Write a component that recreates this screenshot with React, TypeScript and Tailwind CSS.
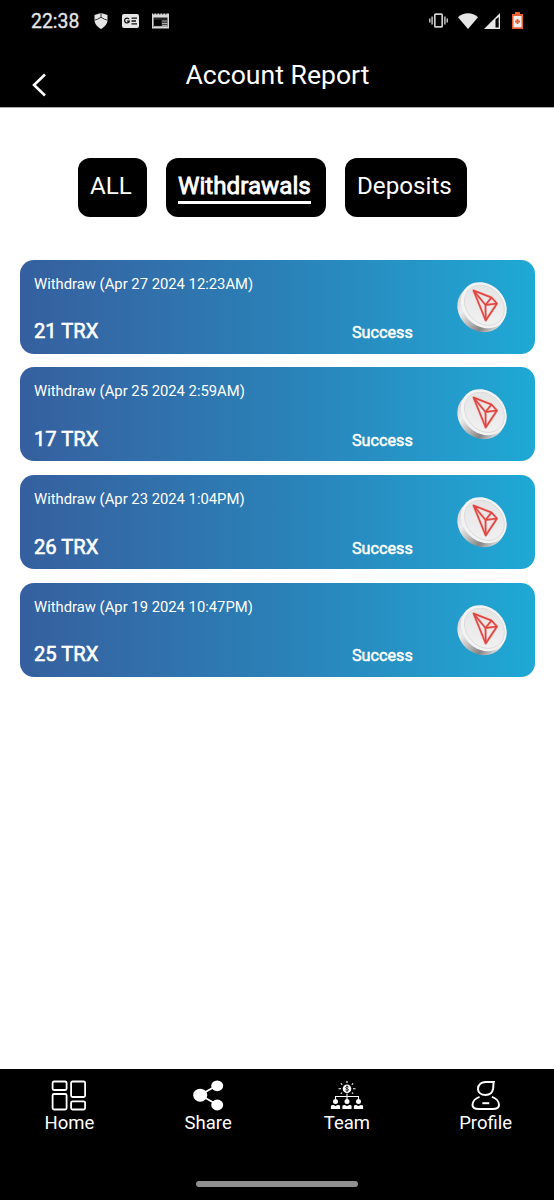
import type { ReactNode } from "react";

const tabs = [
  { label: "ALL", width: "w-[69px]" },
  { label: "Withdrawals", width: "w-[160px]" },
  { label: "Deposits", width: "w-[122px]" },
];

const reports = [
  { date: "Apr 27 2024 12:23AM", amount: 21 },
  { date: "Apr 25 2024 2:59AM", amount: 17 },
  { date: "Apr 23 2024 1:04PM", amount: 26 },
  { date: "Apr 19 2024 10:47PM", amount: 25 },
];

function StatusBar() {
  return (
    <div className="flex h-[41px] items-center pl-[31px] pr-[30px] text-[#e6e6e6]">
      <span className="w-[63px] pt-px text-[19.4px] leading-[41px] [-webkit-text-stroke:0.3px_#e6e6e6]">22:38</span>
      <svg className="h-4 w-[14px]" viewBox="0 0 14 16">
        <path d="M7 0 L13.5 2 V7 C13.5 11 10.5 14 7 16 C3.5 14 .5 11 .5 7 V2Z" fill="#e6e6e6" />
        <path d="M7 0V4.3M.5 7.2L3.5 6.2L7 4.3L10.5 6.2L13.5 7.2" fill="none" stroke="#222" strokeWidth=".9" />
      </svg>
      <svg className="ml-[14px] h-[14px] w-[17px]" viewBox="0 0 17 14" fill="none">
        <rect width="17" height="14" rx="2" fill="#e6e6e6" />
        <path d="M7 5.2A2.4 2.4 0 1 0 7.3 7.2H5M9.5 4.2H15M9.5 7H14M9.5 9.8H15" stroke="#111" strokeWidth="1.3" />
      </svg>
      <svg className="ml-[13px] h-[16px] w-[17px]" viewBox="0 0 17 16" fill="none">
        <path d="M0 .5H17V15.5H0Z" fill="#d8d8d8" />
        <path d="M1.8 0V1.5M4.8 0V1.5M7.8 0V1.5M10.8 0V1.5M13.8 0V1.5" stroke="black" strokeWidth="1" />
        <path d="M1.5 4.5H15.5V14H1.5Z" fill="#222" />
        <path d="M10 8H15.5M10 10.3H15.5M2 13.5H15.5M10 12.3H15.5" stroke="#aaa" strokeWidth="1.2" />
        <path d="M2 7H9V12.5H2Z" fill="black" />
      </svg>
      <div className="ml-auto flex items-center">
        <svg className="h-[15px] w-[19px]" viewBox="0 0 19 15" fill="none" stroke="#d0d0d0">
          <rect x="5.8" y="1.1" width="7.4" height="12.8" rx="1" strokeWidth="1.7" />
          <path d="M.8 5.5V9.5M3.1 3.5V11.5M15.9 3.5V11.5M18.2 5.5V9.5" strokeWidth="1.4" />
        </svg>
        <svg className="ml-[10px] h-[16px] w-[20px]" viewBox="0 0 20 16">
          <path d="M0 4.2C5.5-1.2 14.5-1.2 20 4.2L10 16Z" fill="#e6e6e6" />
        </svg>
        <svg className="ml-[6px] mr-px h-[16px] w-[16px]" viewBox="0 0 16 16">
          <path d="M16 0V16H0Z" fill="#e6e6e6" />
          <path d="M11.5 6.5L14.7 4V14.6H11.5Z" fill="#000" />
        </svg>
        <svg className="ml-[11px] mr-px h-[17px] w-[11px]" viewBox="0 0 11 17">
          <path d="M3 0H8V2H11V17H0V2H3Z" fill="#e65f35" />
          <path d="M1.5 4H9.5V15.3H1.5Z" fill="#eee" />
          <path d="M5.5 7V12M3 9.5H8" stroke="#e65f35" strokeWidth="1.9" />
        </svg>
      </div>
    </div>
  );
}

function TronCoin() {
  return (
    <svg className="h-[54px] w-[54px]" viewBox="0 0 54 54">
      <defs>
        <linearGradient id="edge" x1="0" y1="0" x2="1" y2="0">
          <stop offset="0" stopColor="#d4d4d4" />
          <stop offset="0.25" stopColor="#ededed" />
          <stop offset="0.55" stopColor="#b2b2b2" />
          <stop offset="0.75" stopColor="#858585" />
          <stop offset="1" stopColor="#dcdcdc" />
        </linearGradient>
        <linearGradient id="face" x1="0" y1="0" x2="1" y2="1">
          <stop offset="0" stopColor="#e2e2e2" />
          <stop offset="1" stopColor="#f3f3f3" />
        </linearGradient>
      </defs>
      <ellipse cx="25.3" cy="27.6" rx="25.2" ry="22.3" transform="rotate(42 25.3 27.6)" fill="url(#edge)" />
      <ellipse cx="27.8" cy="24.2" rx="25" ry="20.8" transform="rotate(46 27.8 24.2)" fill="#f3f3f3" />
      <ellipse cx="28.4" cy="24.3" rx="22" ry="17.8" transform="rotate(46 28.4 24.3)" fill="url(#face)" stroke="#d7d7d7" strokeWidth="0.8" />
      <g fill="none" strokeLinejoin="round">
        <path d="M17.5 9.5L35.5 16.5 41 22.5 29.7 39.5Z M17.5 9.5L29.5 24 41 22.5 M29.5 24L29.7 39.5 M29.5 24L35.5 16.5" stroke="#f0aaa6" strokeWidth="2.5" />
        <path d="M17.5 9.5L35.5 16.5 41 22.5 29.7 39.5Z M17.5 9.5L29.5 24 41 22.5 M29.5 24L29.7 39.5 M29.5 24L35.5 16.5" stroke="#df4441" strokeWidth="1.4" />
      </g>
    </svg>
  );
}

function ReportCard({ date, amount }: { date: string; amount: number }) {
  return (
    <div className="flex h-[94px] rounded-[14px] bg-linear-to-r from-[#355f9e] via-[#2a80b7] to-[#1ea9d5] pl-[14px] text-white">
      <div className="w-[318px]">
        <p className="mt-[13px] text-[14.8px] leading-[22px]">Withdraw ({date})</p>
        <p className="mt-[23.7px] text-[20.2px] leading-[26px] [-webkit-text-stroke:0.6px_white]">{amount} TRX</p>
      </div>
      <p className="mt-[62.7px] w-[104px] text-[16.2px] leading-[22px] [-webkit-text-stroke:0.5px_white]">Success</p>
      <div className="mt-[21px]">
        <TronCoin />
      </div>
    </div>
  );
}

function NavItem({ label, children }: { label: string; children: ReactNode }) {
  return (
    <div className="flex flex-1 flex-col items-center pt-[10px]">
      <svg className="h-[34px] w-[36px]" viewBox="0 0 36 34" fill="none" stroke="white">
        {children}
      </svg>
      <span className="text-[18.5px] leading-[20px]">{label}</span>
    </div>
  );
}

function Member({ x }: { x: number }) {
  return (
    <g fill="white" stroke="none">
      <circle cx={x} cy="22.6" r="2.5" />
      <path d={`M${x - 4.6} 30V27Q${x - 4.6} 26 ${x - 2.3} 26L${x} 27L${x + 2.3} 26Q${x + 4.6} 26 ${x + 4.6} 27V30Z`} />
    </g>
  );
}

function BottomNav() {
  return (
    <nav className="flex h-[131px] flex-col bg-black text-white">
      <div className="flex w-[555px]">
        <NavItem label="Home">
          <g strokeWidth="1.8">
            <rect x="1.6" y="2.5" width="14" height="8.5" rx="1.5" />
            <rect x="20.1" y="2.5" width="14" height="15.5" rx="1.5" />
            <rect x="1.6" y="15" width="14" height="15.5" rx="1.5" />
            <rect x="20.1" y="22.3" width="14" height="8.2" rx="1.5" />
          </g>
        </NavItem>
        <NavItem label="Share">
          <path d="M27 6.5L10 16L27 25.5" strokeWidth="1.9" />
          <g fill="white" stroke="none">
            <ellipse cx="10.2" cy="16.2" rx="7" ry="6.5" />
            <ellipse cx="27.2" cy="6.8" rx="6" ry="5.4" />
            <ellipse cx="27.2" cy="26" rx="6" ry="5.4" />
          </g>
        </NavItem>
        <NavItem label="Team">
          <circle cx="18" cy="9.7" r="4.3" fill="white" stroke="none" />
          <path d="M18 2V3.9M11.8 4.4L13.2 5.7M24.2 4.4L22.8 5.7M9.5 9.7H12M24 9.7H26.5M11.8 14.7L13.1 13.6M24.2 14.7L22.9 13.6M18 14.5V21M6.5 21V17.5H29.5V21" strokeWidth="1.1" />
          <path d="M19.6 8.1C18.6 6.9 16.4 7.5 16.7 8.9C17 10.1 19.4 9.3 19.5 10.7C19.4 12.3 17.1 12.3 16.4 11M18 6.5V12.8" stroke="black" strokeWidth=".8" />
          <Member x={6.5} />
          <Member x={18} />
          <Member x={29.5} />
        </NavItem>
        <NavItem label="Profile">
          <g strokeWidth="2">
            <path d="M10 10C10 5.4 13.5 3 17.7 3H25.8C25.2 4.8 25.4 7 25.2 9.2C24.6 13.7 21.3 16 17.5 16C13.1 16 10 13.5 10 10Z" />
            <path d="M11.6 17.9C7.5 19.2 4.5 22.5 4.5 26C4.5 29 6.8 30 10.8 30H24.8C28.8 30 31 28.8 31 26C31 22.5 28 19.2 23.9 17.9" />
            <path d="M14.3 24.2H21.3" />
          </g>
        </NavItem>
      </div>
      <div className="mx-auto mt-auto mb-[13px] h-[6px] w-[162px] rounded-full bg-[#909090]" />
    </nav>
  );
}

export default function App() {
  const selectedTab = "Withdrawals";

  return (
    <div className="flex h-[1200px] w-[554px] flex-col overflow-hidden bg-white font-[Roboto,sans-serif]">
      <header className="h-[108px] shrink-0 border-b border-[#aaa] bg-black text-white">
        <StatusBar />
        <div className="flex h-[66px]">
          <button className="w-[120px] pl-[32px]" aria-label="Back">
            <svg className="mt-[21px] h-[24px] w-[15px]" viewBox="0 0 15 24" fill="none" stroke="white" strokeWidth="2.6">
              <path d="M13 1.5L2 12L13 22.5" />
            </svg>
          </button>
          <h1 className="mt-[17.5px] w-[315px] text-center text-[26.6px] leading-[32px]">Account Report</h1>
        </div>
      </header>
      <main className="flex-1 px-5">
        <div className="mt-[50px] flex gap-[19px] pl-[58px]">
          {tabs.map(({ label, width }) => (
            <button
              key={label}
              className={`${width} flex h-[59px] items-start rounded-[12px] bg-black pl-[12px] pt-[13px] text-[24.2px] leading-[30px] text-white`}
            >
              {label === selectedTab ? (
                <span className="h-[33px] border-b-3 border-white [-webkit-text-stroke:0.8px_white]">{label}</span>
              ) : (
                <span>{label}</span>
              )}
            </button>
          ))}
        </div>
        <div className="mt-[42.6px] flex w-[515px] flex-col gap-[13.7px]">
          {reports.map((report) => (
            <ReportCard key={report.date} {...report} />
          ))}
        </div>
      </main>
      <BottomNav />
    </div>
  );
}
